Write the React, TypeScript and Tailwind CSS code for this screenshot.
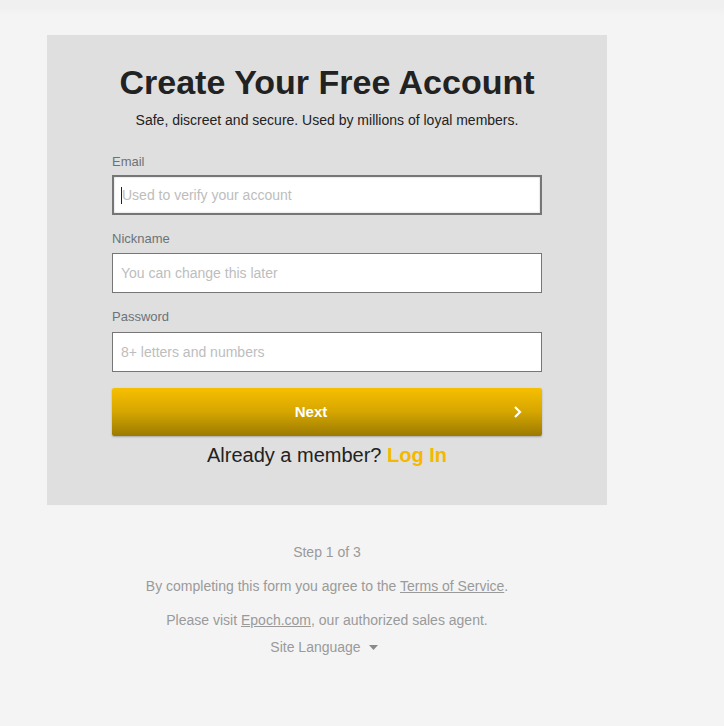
import React from "react";

export default function App() {
  const font = { fontFamily: '"Liberation Sans", Arial, sans-serif' };
  return (
    <div className="min-h-[726px] w-full bg-[#f4f4f4]" style={font}>
      <div className="h-[7px] bg-[#f0f0f0]" />
      <div className="h-[8px] bg-gradient-to-b from-[#f0f0f0] to-[#f4f4f4]" />
      <div className="pl-[47px] pt-[20px]">
        <div className="w-[560px] h-[470px] bg-[#dfdfdf] px-[65px] pt-[28px]">
          <h1 className="text-center text-[34px] leading-[38px] font-bold text-[#222] whitespace-nowrap -mx-[20px]">
            Create Your Free Account
          </h1>
          <p className="mt-[9px] text-center text-[14px] leading-[20px] text-[#222]">
            Safe, discreet and secure. Used by millions of loyal members.
          </p>
          <label className="mt-[23px] block text-[13px] leading-[18px] text-[#6b7378]">Email</label>
          <div className="mt-[4px] h-[40px] border-2 border-[#767676] bg-white shadow-[inset_0_0_2px_rgba(0,0,0,0.25)] flex items-center pl-[7px]">
            <span className="w-px h-[17px] bg-[#222]" />
            <span className="text-[14px] text-[#bdbdbd]">Used to verify your account</span>
          </div>
          <label className="mt-[15px] block text-[13px] leading-[18px] text-[#6b7378]">Nickname</label>
          <div className="mt-[5px] h-[40px] border border-[#767676] bg-white flex items-center pl-[8px]">
            <span className="text-[14px] text-[#bdbdbd]">You can change this later</span>
          </div>
          <label className="mt-[15px] block text-[13px] leading-[18px] text-[#6b7378]">Password</label>
          <div className="mt-[6px] h-[40px] border border-[#767676] bg-white flex items-center pl-[8px]">
            <span className="text-[14px] text-[#bdbdbd]">8+ letters and numbers</span>
          </div>
          <button className="mt-[16px] relative w-full h-[48px] rounded-[2px] bg-gradient-to-b from-[#f7bf00] via-[#d6a600] to-[#9b7a00] shadow-[0_1px_2px_rgba(0,0,0,0.25)] flex items-center justify-center pr-[32px]">
            <span className="text-white font-bold text-[15px]">Next</span>
            <svg className="absolute right-[20px] top-1/2 -translate-y-1/2" width="9" height="13" viewBox="0 0 9 13">
              <path d="M2 1.5 L7 6.5 L2 11.5" stroke="white" strokeWidth="2.2" fill="none" />
            </svg>
          </button>
          <p className="mt-[7px] text-center text-[20px] leading-[24px] text-[#222]">
            Already a member? <span className="font-bold text-[#f5b800]">Log In</span>
          </p>
        </div>
      </div>
      <div className="w-[654px] text-center text-[14px] text-[#9a9a9a]">
        <p className="mt-[37px] leading-[20px]">Step 1 of 3</p>
        <p className="mt-[14px] leading-[20px]">
          By completing this form you agree to the <span className="underline">Terms of Service</span>.
        </p>
        <p className="mt-[14px] leading-[20px]">
          Please visit <span className="underline">Epoch.com</span>, our authorized sales agent.
        </p>
        <p className="mt-[7px] leading-[20px] flex items-center justify-center gap-[8px] -ml-[6px]">
          <span>Site Language</span>
          <svg width="9" height="5" viewBox="0 0 9 5"><path d="M0 0 L9 0 L4.5 5 Z" fill="#8a8a8a" /></svg>
        </p>
      </div>
    </div>
  );
}
